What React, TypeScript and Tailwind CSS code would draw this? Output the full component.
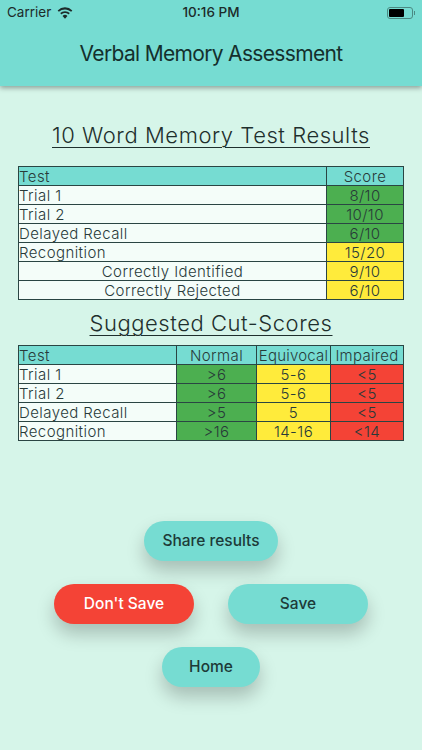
import { ReactNode } from "react";

const green = "bg-[#4caf50]";
const yellow = "bg-[#ffeb3b]";
const red = "bg-[#f44336]";

const results = [
  { label: "Trial 1", score: "8/10", color: green },
  { label: "Trial 2", score: "10/10", color: green },
  { label: "Delayed Recall", score: "6/10", color: green },
  { label: "Recognition", score: "15/20", color: yellow },
  { label: "Correctly Identified", score: "9/10", color: yellow, center: true },
  { label: "Correctly Rejected", score: "6/10", color: yellow, center: true },
];

const cutScores = [
  { label: "Trial 1", normal: ">6", equivocal: "5-6", impaired: "<5" },
  { label: "Trial 2", normal: ">6", equivocal: "5-6", impaired: "<5" },
  { label: "Delayed Recall", normal: ">5", equivocal: "5", impaired: "<5" },
  { label: "Recognition", normal: ">16", equivocal: "14-16", impaired: "<14" },
];

function Cell({
  children,
  className = "",
  tracking = "tracking-[0.42px]",
}: {
  children: ReactNode;
  className?: string;
  tracking?: string;
}) {
  return (
    <td className={`h-[19px] border border-[#2a4543] p-0 text-center text-[15px] font-[350] leading-[17px] text-[#283a39] ${tracking} ${className}`}>
      {children}
    </td>
  );
}

function Heading({ children }: { children: ReactNode }) {
  return (
    <h2 className="text-center text-[22px] font-[350] leading-[28px] tracking-[0.55px] text-[#1e2f2d] underline decoration-1 underline-offset-[4px]">
      {children}
    </h2>
  );
}

function PillButton({ children, className = "" }: { children: ReactNode; className?: string }) {
  return (
    <button className={`h-[40px] rounded-full text-[15.5px] font-medium shadow-[0_10px_18px_rgba(0,0,0,0.22)] ${className}`}>
      {children}
    </button>
  );
}

export default function App() {
  return (
    <div className="flex h-[750px] w-[422px] flex-col overflow-hidden bg-[#d6f5e9] font-['Inter',sans-serif]">
      {/* Header */}
      <div className="h-[86px] bg-[#76dcd2] shadow-[0_2px_5px_rgba(0,0,0,0.35)]">
        <div className="grid h-[24px] grid-cols-3 items-center px-[7px] pt-[1px] text-[#1d2b2a]">
          <div className="flex items-center gap-[6px] text-[13.5px]">
            <span>Carrier</span>
            <svg width="16" height="12" viewBox="0 0 17 12" fill="currentColor">
              <path d="M8.5 2.2c2.5 0 4.8 1 6.5 2.6l1.3-1.4A11.300 11.300 0 0 0 8.500 0 11.300 11.300 0 0 0 .7 3.400L2 4.800a9.400 9.400 0 0 1 6.500-2.600z" />
              <path d="M8.500 6c1.500 0 2.800.6 3.800 1.500l1.300-1.400a7.500 7.500 0 0 0-10.200 0l1.300 1.400c1-.9 2.300-1.500 3.800-1.500z" />
              <path d="M8.500 12l2.600-2.800a3.700 3.700 0 0 0-5.200 0z" />
            </svg>
          </div>
          <span className="text-center text-[13.5px] font-medium">10:16 PM</span>
          <div className="flex items-center justify-end">
            <div className="flex h-[12px] w-[26px] items-center rounded-[3px] border border-[#4b8a83] p-[1px]">
              <div className="h-full w-[15px] rounded-[1px] bg-black" />
            </div>
            <div className="ml-[1px] h-[4px] w-[1px] bg-[#4b8a83]" />
          </div>
        </div>
        <h1 className="mt-[12px] text-center text-[21px] leading-[36px] tracking-[-0.67px] text-[#14302d]">
          Verbal Memory Assessment
        </h1>
      </div>

      <div className="flex flex-col px-[18px]">
        <div className="mt-[35px]">
          <Heading>10 Word Memory Test Results</Heading>
        </div>

        {/* Results table */}
        <table className="mt-[17px] w-[386px] table-fixed border-collapse">
          <thead>
            <tr className="bg-[#76dcd2]">
              <Cell className="text-left">Test</Cell>
              <Cell className="w-[77px]">Score</Cell>
            </tr>
          </thead>
          <tbody>
            {results.map((row) => (
              <tr key={row.label}>
                <Cell className={`bg-[#f4fdf9] ${row.center ? "" : "text-left"}`}>{row.label}</Cell>
                <Cell className={row.color}>{row.score}</Cell>
              </tr>
            ))}
          </tbody>
        </table>

        <div className="mt-[9px]">
          <Heading>Suggested Cut-Scores</Heading>
        </div>

        {/* Cut-scores table */}
        <table className="mt-[8px] w-[386px] table-fixed border-collapse">
          <thead>
            <tr className="bg-[#76dcd2]">
              <Cell className="text-left">Test</Cell>
              <Cell className="w-[80px]">Normal</Cell>
              <Cell className="w-[74px]" tracking="tracking-[0.2px]">Equivocal</Cell>
              <Cell className="w-[73px]" tracking="tracking-[0.3px]">Impaired</Cell>
            </tr>
          </thead>
          <tbody>
            {cutScores.map((row) => (
              <tr key={row.label}>
                <Cell className="bg-[#f4fdf9] text-left">{row.label}</Cell>
                <Cell className={green}>{row.normal}</Cell>
                <Cell className={yellow}>{row.equivocal}</Cell>
                <Cell className={red}>{row.impaired}</Cell>
              </tr>
            ))}
          </tbody>
        </table>
      </div>

      {/* Actions */}
      <div className="mt-[80px] flex flex-col items-center">
        <PillButton className="w-[134px] bg-[#76dcd2] text-[#1d3a38]">Share results</PillButton>
        <div className="mt-[23px] flex gap-[34px]">
          <PillButton className="w-[140px] bg-[#f44336] text-white">Don't Save</PillButton>
          <PillButton className="w-[140px] bg-[#76dcd2] text-[#1d3a38]">Save</PillButton>
        </div>
        <PillButton className="mt-[23px] w-[98px] bg-[#76dcd2] text-[#1d3a38]">Home</PillButton>
      </div>
    </div>
  );
}
